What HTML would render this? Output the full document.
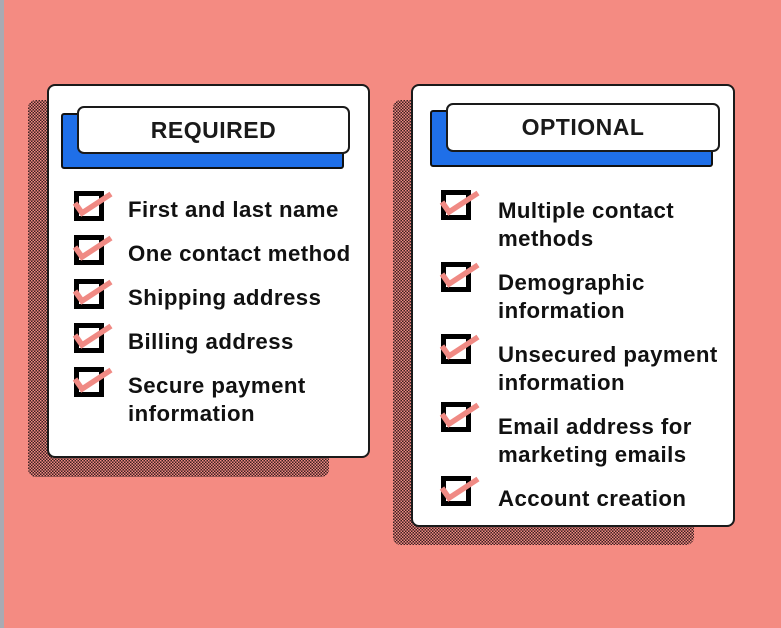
<!DOCTYPE html>
<html><head><style>
*{margin:0;padding:0;box-sizing:border-box}
body{width:781px;height:628px;background:#f48b82;position:relative;overflow:hidden;font-family:"Liberation Sans",Arial,sans-serif}
.strip{position:absolute;left:0;top:0;width:4px;height:628px;background:#a9aab2}
.sh{position:absolute;border-radius:8px;background:repeating-conic-gradient(#3b2021 0 25%,#f08a82 0 50%) 0 0/3px 3px}
.card{position:absolute;background:#fff;border:2px solid #1a1a1a;border-radius:8px}
.blue{position:absolute;background:#1f6fe8;border:2px solid #111;border-radius:3px}
.tag{position:absolute;background:#fff;border:2.5px solid #1a1a1a;border-radius:7px;font-weight:bold;font-size:23px;color:#1a1a1a;display:flex;align-items:center;justify-content:center;letter-spacing:0.5px}
.t{position:absolute;font-size:22.2px;font-weight:bold;color:#111;line-height:28px;letter-spacing:0.45px}
</style></head><body>
<div class="strip"></div>
<div class="sh" style="left:28px;top:100px;width:301px;height:377px"></div>
<div class="card" style="left:47px;top:84px;width:323px;height:374px"></div>
<div class="blue" style="left:61px;top:113px;width:283px;height:56px"></div>
<div class="tag" style="left:77px;top:106px;width:273px;height:48px">REQUIRED</div>

<div class="sh" style="left:393px;top:100px;width:301px;height:445px"></div>
<div class="card" style="left:411px;top:84px;width:324px;height:443px"></div>
<div class="blue" style="left:430px;top:110px;width:283px;height:57px"></div>
<div class="tag" style="left:446px;top:103px;width:274px;height:49px">OPTIONAL</div>

<svg width="781" height="628" style="position:absolute;left:0;top:0">
<defs><g id="c"><rect x="2.5" y="2.5" width="25" height="25" fill="#fff" stroke="#000" stroke-width="5"/><path d="M1 12 L8 22 L37 3" fill="none" stroke="#f08a84" stroke-width="5.5"/></g></defs>
<use href="#c" x="74" y="191"/><use href="#c" x="74" y="235"/><use href="#c" x="74" y="279"/><use href="#c" x="74" y="323"/><use href="#c" x="74" y="367"/>
<use href="#c" x="441" y="190"/><use href="#c" x="441" y="262"/><use href="#c" x="441" y="334"/><use href="#c" x="441" y="402"/><use href="#c" x="441" y="476"/>
</svg>

<div class="t" style="left:128px;top:196px">First and last name</div>
<div class="t" style="left:128px;top:240px">One contact method</div>
<div class="t" style="left:128px;top:284px">Shipping address</div>
<div class="t" style="left:128px;top:328px">Billing address</div>
<div class="t" style="left:128px;top:372px">Secure payment<br>information</div>

<div class="t" style="left:498px;top:197px">Multiple contact<br>methods</div>
<div class="t" style="left:498px;top:269px">Demographic<br>information</div>
<div class="t" style="left:498px;top:341px">Unsecured payment<br>information</div>
<div class="t" style="left:498px;top:413px">Email address for<br>marketing emails</div>
<div class="t" style="left:498px;top:485px">Account creation</div>
</body></html>
